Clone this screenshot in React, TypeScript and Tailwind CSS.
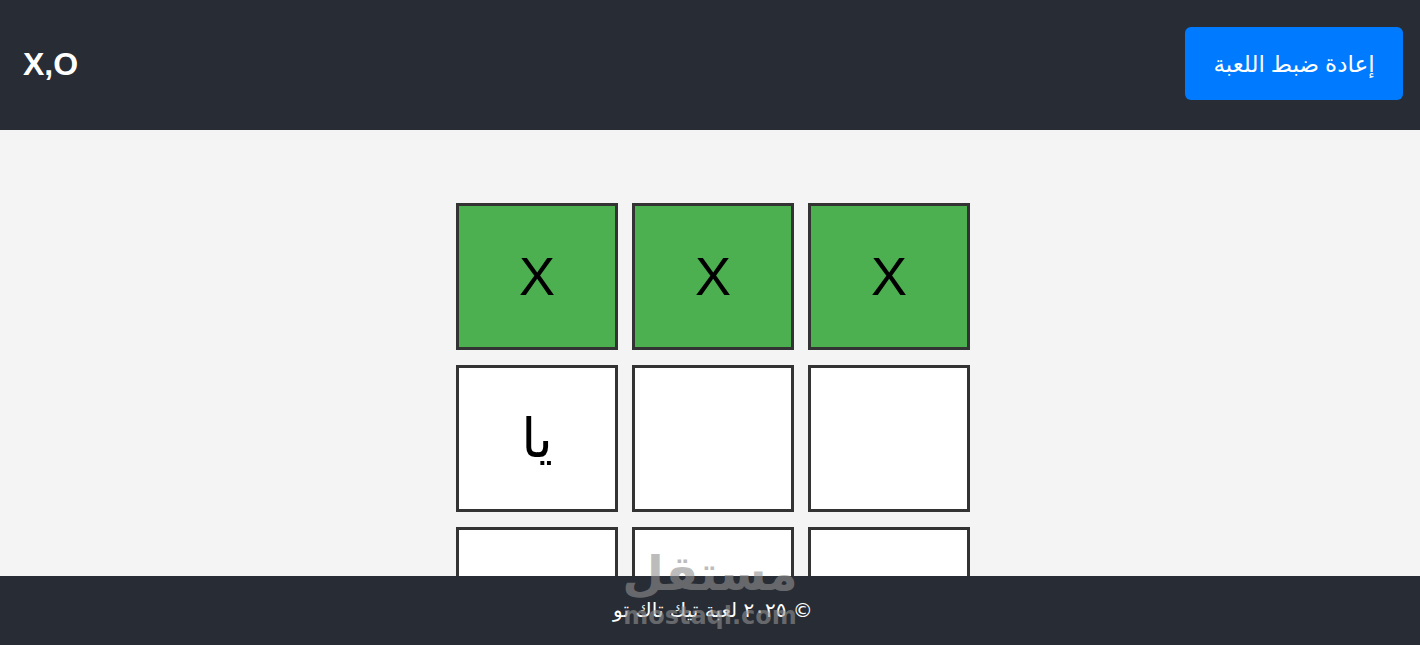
import React from "react";

const cells: { v: string; win?: boolean }[] = [
  { v: "X", win: true },
  { v: "X", win: true },
  { v: "X", win: true },
  { v: "يا" },
  { v: "" },
  { v: "" },
  { v: "" },
  { v: "" },
  { v: "" },
];

export default function App() {
  return (
    <div className="relative h-screen flex flex-col bg-[#f4f4f4] overflow-hidden">
      <header className="h-[130px] shrink-0 bg-[#282c34] flex items-center justify-between pl-[23px] pr-[17px] pb-[3px]">
        <h1 className="text-white text-[32px] font-bold font-['Liberation_Sans',sans-serif] leading-none">
          X,O
        </h1>
        <button
          className="w-[218px] h-[73px] rounded-[6px] bg-[#007bff] text-white text-[23px] font-['Noto_Sans','DejaVu_Sans',sans-serif]"
          dir="rtl"
        >
          إعادة ضبط اللعبة
        </button>
      </header>
      <main className="flex-1 min-h-0 overflow-hidden flex justify-center pt-[73px] pl-[6px]">
        <div className="grid grid-cols-[162px_162px_162px] auto-rows-[147px] gap-x-[14px] gap-y-[15px] h-max">
          {cells.map((c, i) => (
            <div
              key={i}
              className={`border-[3px] border-[#333] flex items-center justify-center text-black text-[54px] font-['Liberation_Sans','DejaVu_Sans',sans-serif] ${
                c.win ? "bg-[#4caf50]" : "bg-white"
              }`}
            >
              {c.v}
            </div>
          ))}
        </div>
      </main>
      <footer className="h-[69px] shrink-0 bg-[#282c34] flex items-center justify-center pl-[6px] pb-[2px]">
        <p className="text-white text-[20px] font-['DejaVu_Sans',sans-serif]" dir="rtl">
          © ٢٠٢٥ لعبة تيك تاك تو
        </p>
      </footer>
      <div className="pointer-events-none absolute left-[610px] top-[545px] w-[200px] flex flex-col items-center text-[#909090] opacity-60 font-['DejaVu_Sans',sans-serif] font-black">
        <span className="text-[48px] leading-[56px]" dir="rtl">
          مستقل
        </span>
        <span className="text-[24px] leading-[28px] mt-[1px]">mostaql.com</span>
      </div>
    </div>
  );
}
